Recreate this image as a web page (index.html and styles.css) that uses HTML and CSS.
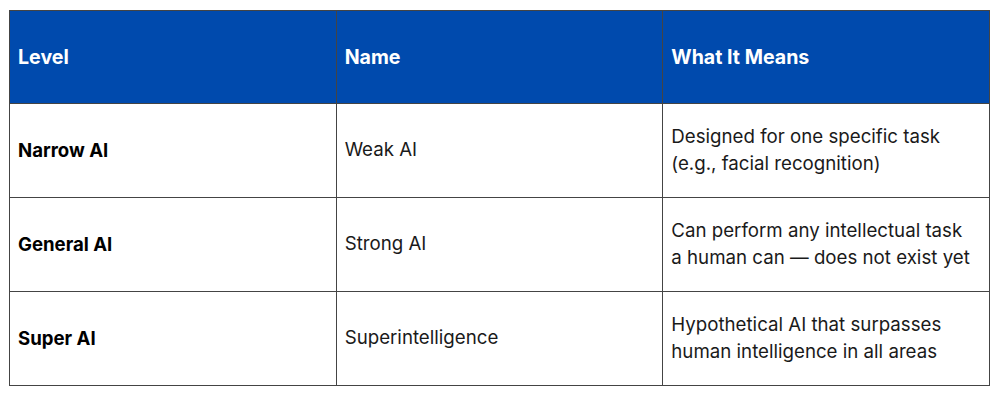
FILE: index.html
```html
<!DOCTYPE html>
<html>
<head>
<meta charset="utf-8">
<link rel="stylesheet" href="styles.css">
</head>
<body>
<table class="levels">
  <thead>
    <tr>
      <th>Level</th>
      <th>Name</th>
      <th>What It Means</th>
    </tr>
  </thead>
  <tbody>
    <tr>
      <td class="level">Narrow AI</td>
      <td>Weak AI</td>
      <td>Designed for one specific task<br>(e.g., facial recognition)</td>
    </tr>
    <tr>
      <td class="level">General AI</td>
      <td>Strong AI</td>
      <td>Can perform any intellectual task<br>a human can — does not exist yet</td>
    </tr>
    <tr>
      <td class="level">Super AI</td>
      <td>Superintelligence</td>
      <td>Hypothetical AI that surpasses<br>human intelligence in all areas</td>
    </tr>
  </tbody>
</table>
</body>
</html>
```
FILE: styles.css
```css
html, body {
  margin: 0;
  background: #ffffff;
}
body {
  padding: 10px 0 0 9px;
  font-family: Inter, "Noto Sans", sans-serif;
  color: #1a1a1a;
}
.levels {
  border-collapse: collapse;
  width: 981px;
  table-layout: fixed;
  border: 1px solid #555555;
}
.levels th,
.levels td {
  border: 1px solid #444444;
  padding: 0 8px;
  text-align: left;
  vertical-align: middle;
  box-sizing: border-box;
  font-size: 18.7px;
  line-height: 26.5px;
}
.levels th {
  height: 93px;
  background: #004aad;
  color: #ffffff;
  font-weight: 700;
  font-size: 19.6px;
}
.levels td {
  height: 94px;
  font-weight: 400;
}
.levels td.level {
  font-weight: 700;
  color: #000000;
  font-size: 18.6px;
}
```
